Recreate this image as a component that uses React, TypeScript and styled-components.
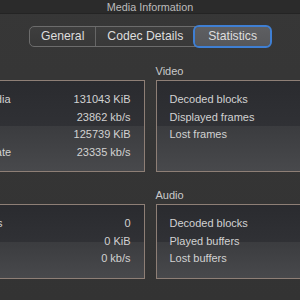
import styled, { createGlobalStyle } from "styled-components";

const GlobalStyle = createGlobalStyle`
  html, body {
    margin: 0;
    padding: 0;
    background: #353535;
  }
  body {
    font-family: "Liberation Sans", Arial, sans-serif;
  }
`;

const Viewport = styled.div`
  width: 300px;
  height: 300px;
  overflow: hidden;
  display: flex;
  justify-content: center;
  background: linear-gradient(#373737, #333333);
`;

const Window = styled.div`
  flex-shrink: 0;
  width: 457px;
  display: flex;
  flex-direction: column;
  align-items: center;
`;

const TitleBar = styled.div`
  align-self: stretch;
  height: 13px;
  line-height: 14px;
  text-align: center;
  font-size: 10.8px;
  color: #bcbcbc;
  background: #2b2b2b;
  border-bottom: 1px solid #242424;
`;

const Segmented = styled.div`
  margin-top: 12px;
  display: flex;
  height: 19px;
  border: 1px solid #6c6c6c;
  border-radius: 5px;
  background: linear-gradient(#3e3e3e, #383838);
`;

const Segment = styled.div<{ $active?: boolean; $last?: boolean }>`
  padding: 0 11px;
  font-size: 12.2px;
  line-height: 19px;
  color: #dedede;
  border-right: ${(p) => (p.$last ? "none" : "1px solid #666")};
  ${(p) =>
    p.$active &&
    `
    background: linear-gradient(#5e5f62, #56575a);
    border-radius: 4px;
    outline: 2px solid #3f7fd3;
    padding: 0 13px;
  `}
`;

const Grid = styled.div`
  margin-top: 18px;
  display: grid;
  grid-template-columns: 219.5px 219.5px;
  column-gap: 11px;
  row-gap: 17px;
`;

const Group = styled.div`
  display: flex;
  flex-direction: column;
`;

const GroupLabel = styled.div`
  font-size: 11px;
  line-height: 13px;
  color: #cacaca;
  margin-bottom: 2px;
`;

const Box = styled.div`
  flex: 1;
  border: 1px solid #8e7f76;
  padding: 10px 13px;
  background: linear-gradient(
    #2a2b2f 0%,
    #303135 50%,
    #3b3c3f 50%,
    #48494c 100%
  );
`;

const Row = styled.div`
  display: flex;
  justify-content: space-between;
  font-size: 11px;
  line-height: 17.5px;
  color: #d2d2d2;
  white-space: nowrap;
`;

type Stat = [string, string];

const input: Stat[] = [
  ["Read at media", "131043 KiB"],
  ["Input bitrate", "23862 kb/s"],
  ["Demuxed", "125739 KiB"],
  ["Content bitrate", "23335 kb/s"],
];

const video: Stat[] = [
  ["Decoded blocks", ""],
  ["Displayed frames", ""],
  ["Lost frames", ""],
];

const output: Stat[] = [
  ["Sent packets", "0"],
  ["Sent bytes", "0 KiB"],
  ["Sent bitrate", "0 kb/s"],
];

const audio: Stat[] = [
  ["Decoded blocks", ""],
  ["Played buffers", ""],
  ["Lost buffers", ""],
];

function StatGroup({ label, rows }: { label: string; rows: Stat[] }) {
  return (
    <Group>
      <GroupLabel>{label}</GroupLabel>
      <Box>
        {rows.map(([name, value]) => (
          <Row key={name}>
            <span>{name}</span>
            <span>{value}</span>
          </Row>
        ))}
      </Box>
    </Group>
  );
}

export default function App() {
  return (
    <>
      <GlobalStyle />
      <Viewport>
        <Window>
          <TitleBar>Media Information</TitleBar>
          <Segmented>
            <Segment>General</Segment>
            <Segment>Codec Details</Segment>
            <Segment $active $last>
              Statistics
            </Segment>
          </Segmented>
          <Grid>
            <StatGroup label="Input/Read" rows={input} />
            <StatGroup label="Video" rows={video} />
            <StatGroup label="Output/Written" rows={output} />
            <StatGroup label="Audio" rows={audio} />
          </Grid>
        </Window>
      </Viewport>
    </>
  );
}
